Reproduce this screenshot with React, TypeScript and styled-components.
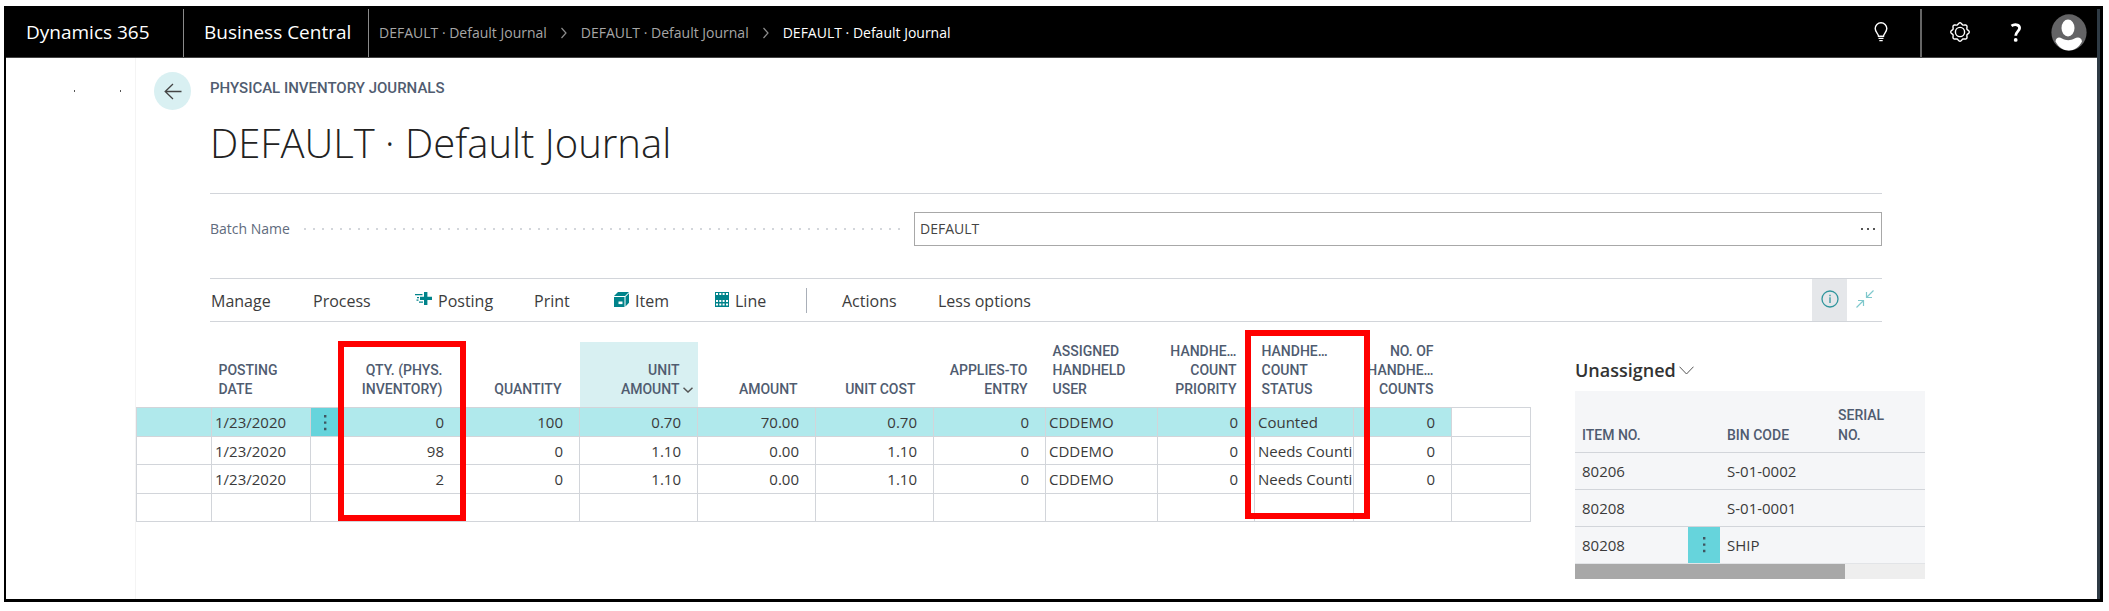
import React from 'react';
import styled, { createGlobalStyle, css } from 'styled-components';

const ui = `"Open Sans", "Noto Sans", sans-serif`;
const caps = `Roboto, "Liberation Sans", sans-serif`;
const line = '#d2d5da';
const slate = '#505c70';
const teal = '#00838a';

const Global = createGlobalStyle`
  *, *::before, *::after { box-sizing: border-box; }
  body { margin: 0; background: #fff; color: #333; font: 15px/20px ${ui}; }
  button { font: inherit; color: inherit; background: none; border: 0; padding: 0; cursor: pointer; }
  a { color: inherit; text-decoration: none; }
  svg { display: block; }
  h1, h2 { margin: 0; }
`;

const Frame = styled.div`
  margin: 6px 6px 8px 4px;
  border: solid #000;
  border-width: 3px 3px 3px 2px;
`;
const Inner = styled.div`
  border-right: 3px solid #2f3b45;
`;
const TopBar = styled.header`
  display: flex;
  height: 49px;
  background: #000;
  color: #fff;
  border-bottom: 1px solid #444;
`;
const Brand = styled.a<{ $w: number }>`
  flex: 0 0 ${p => p.$w}px;
  padding-left: 20px;
  border-right: 1px solid #8a8a8a;
  font-size: 19px;
  line-height: 46px;
  white-space: nowrap;
`;
const Crumbs = styled.nav`
  display: flex;
  align-items: center;
  gap: 13px;
  padding-left: 10px;
  flex: 1;
  white-space: nowrap;
  font-size: 14px;
`;
const Crumb = styled.a<{ $current?: boolean }>`
  color: ${p => (p.$current ? '#fff' : '#a6a6a6')};
`;
const TopIcons = styled.div`
  display: flex;
  align-items: stretch;
`;
const IconButton = styled.button<{ $w: number; $divided?: boolean; $end?: boolean }>`
  width: ${p => p.$w}px;
  display: flex;
  align-items: center;
  justify-content: center;
  padding-bottom: 2px;
  ${p => p.$divided && css`border-right: 2px solid #666;`}
  ${p => p.$end && css`justify-content: flex-end; padding-right: 10px;`}
`;

const Page = styled.div`
  display: flex;
`;
const Rail = styled.aside`
  flex: 0 0 130px;
  display: flex;
  justify-content: flex-end;
  gap: 45px;
  padding: 32px 14px 0 0;
  border-right: 1px solid #f4f4f4;
`;
const Speck = styled.i`
  width: 1px;
  height: 2px;
  background: #555;
`;
const Main = styled.main`
  flex: 1;
  min-width: 0;
  padding: 14px 0 20px;
`;
const Heading = styled.div`
  display: flex;
  align-items: flex-start;
  gap: 19px;
  padding-left: 18px;
`;
const Back = styled.button`
  width: 37px;
  height: 38px;
  border-radius: 50%;
  background: #d9f0f2;
  display: grid;
  place-items: center;
`;
const Overline = styled.div`
  font: 500 15px/20px ${caps};
  color: ${slate};
  padding-top: 6px;
`;
const Title = styled.h1`
  font: 300 40px/56px ${ui};
  color: #222;
  padding-top: 17px;
`;
const Section = styled.section`
  margin: 0 215px 0 74px;
`;
const Field = styled.div`
  display: flex;
  align-items: center;
  gap: 11px;
  margin-top: 22px;
  padding: 18px 0 32px;
  border-top: 1px solid ${line};
  font-size: 14px;
  color: #5f6b7d;
`;
const FieldLabel = styled.label`
  flex: 0 0 693px;
  display: flex;
  align-items: center;
  gap: 14px;
  white-space: nowrap;
`;
const Leader = styled.span`
  flex: 1;
  height: 2px;
  background: repeating-linear-gradient(90deg, #d3d6db 0 2px, transparent 2px 9px);
`;
const Lookup = styled.div`
  flex: 1;
  display: flex;
  height: 34px;
  border: 1px solid #a8a8a8;
`;
const LookupInput = styled.input`
  flex: 1;
  min-width: 0;
  border: 0;
  outline: 0;
  padding: 0 5px;
  background: none;
  font: 14px/20px ${ui};
  color: #444;
`;
const LookupButton = styled.button`
  width: 26px;
  display: grid;
  place-items: center;
`;
const Toolbar = styled.div`
  display: flex;
  align-items: center;
  height: 44px;
  border: solid ${line};
  border-width: 1px 0;
  font-size: 16px;
  color: #3c3c3c;
`;
const Tool = styled.button<{ $w: number }>`
  flex: 0 0 ${p => p.$w}px;
  display: flex;
  align-items: center;
  gap: 6px;
  padding: 2px 0 0 1px;
  text-align: left;
  white-space: nowrap;
  svg { margin-top: -4px; }
`;
const Rule = styled.span`
  width: 1px;
  height: 25px;
  margin-right: 34px;
  background: #a9afb8;
`;
const Spacer = styled.span`
  flex: 1;
`;
const SideTool = styled.button<{ $on?: boolean }>`
  width: 35px;
  height: 42px;
  display: grid;
  place-items: center;
  padding-bottom: 2px;
  background: ${p => (p.$on ? '#e5e7ea' : 'none')};
`;

const Body = styled.div`
  display: flex;
  align-items: flex-start;
`;
const Journal = styled.div`
  position: relative;
  flex: 0 0 1394px;
  margin-top: 20px;
`;
const Grid = styled.table`
  width: 100%;
  table-layout: fixed;
  border-collapse: collapse;
`;
const HeadCell = styled.th<{ $right?: boolean; $active?: boolean }>`
  height: 65px;
  padding: 0 ${p => (p.$right ? 18 : 0)}px 8px ${p => (p.$right ? 0 : 7)}px;
  vertical-align: bottom;
  text-align: ${p => (p.$right ? 'right' : 'left')};
  font: 500 14px/19px ${caps};
  color: ${slate};
  white-space: nowrap;
  background: ${p => (p.$active ? '#d8f0f2' : 'none')};
  svg { float: right; margin: 7px -13px 0 0; }
`;
const HeadLine = styled.div`
  display: flex;
  justify-content: inherit;
  display: block;
  margin-left: -4px;
  padding-left: 4px;
`;
const Row = styled.tr<{ $selected?: boolean }>`
  height: 29px;
  &:nth-child(even) { height: 28px; }
  background: ${p => (p.$selected ? '#b0e9ec' : 'none')};
`;
const Cell = styled.td<{ $right?: boolean; $plain?: boolean; $menu?: boolean }>`
  border: 1px solid ${line};
  padding: 0 ${p => (p.$right ? 16 : 3)}px 0 3px;
  text-align: ${p => (p.$right ? 'right' : 'left')};
  line-height: 26px;
  color: #3a3a3a;
  white-space: nowrap;
  overflow: hidden;
  ${p => p.$plain && css`background: #fff;`}
  ${p => p.$menu && css`background: #66d4dc;`}
`;
const MenuButton = styled.button`
  display: grid;
  place-items: center;
  width: 100%;
  height: 24px;
`;
const Highlight = styled.div<{ $x: number; $y: number; $w: number; $h: number }>`
  position: absolute;
  left: ${p => p.$x}px;
  top: ${p => p.$y}px;
  width: ${p => p.$w}px;
  height: ${p => p.$h}px;
  border: 6px solid #f00;
  pointer-events: none;
`;

const FactBox = styled.aside`
  flex: 0 0 350px;
  margin: 35px 0 0 44px;
`;
const FactTitle = styled.h2`
  button { display: flex; align-items: center; gap: 3px; }
  font: 600 18px/26px ${ui};
  color: #333;
  padding-bottom: 8px;
`;
const FactTable = styled.table`
  width: 100%;
  table-layout: fixed;
  border-collapse: collapse;
  background: #f5f6f8;
`;
const FactHead = styled.th`
  height: 61px;
  padding: 0 0 7px 7px;
  vertical-align: bottom;
  text-align: left;
  font: 500 14px/20px ${caps};
  color: ${slate};
`;
const FactCell = styled.td<{ $menu?: boolean }>`
  height: 37px;
  padding: ${p => (p.$menu ? '0' : '0 0 0 7px')};
  border-top: 1px solid ${line};
  color: #3a3a3a;
  background: ${p => (p.$menu ? '#66d4dc' : 'none')};
`;
const ScrollTrack = styled.div`
  height: 16px;
  border-top: 1px solid #e2e4e7;
  background: #eee;
`;
const ScrollThumb = styled.div`
  width: 77%;
  height: 15px;
  background: #a8a8a8;
`;

const Chevron = ({ w, h, s = 1 }: { w: number; h: number; s?: number }) => (
  <svg width={w} height={h} viewBox={`0 0 ${w} ${h}`} fill="none" stroke="#555" strokeWidth={s}>
    <path d={`M.5 .7 L${w / 2} ${h - 1} L${w - 0.5} .7`} />
  </svg>
);
const Next = () => (
  <svg width="8" height="12" viewBox="0 0 8 12" fill="none" stroke="#8c8c8c" strokeWidth="1.2">
    <path d="M1.5 1 6 6 1.5 11" />
  </svg>
);
const Dots = () => (
  <svg width="4" height="17" viewBox="0 0 4 17" fill="#3f5560">
    <path d="M1 1h2.4v2.4H1zM1 7.4h2.4v2.4H1zM1 13.8h2.4v2.4H1z" />
  </svg>
);
const gear = Array.from({ length: 64 }, (_, i) => {
  const a = (i / 64) * Math.PI * 2;
  const r = 8.4 + 0.9 * Math.cos(a * 8);
  return `${i ? 'L' : 'M'}${(10 + r * Math.sin(a)).toFixed(2)} ${(10 - r * Math.cos(a)).toFixed(2)}`;
}).join('') + 'Z';

const cols = [75, 99, 28, 122, 119, 118, 118, 118, 112, 112, 97, 99, 98, 79];
const heads: { t: string[]; r?: boolean; active?: boolean }[] = [
  { t: [] },
  { t: ['POSTING', 'DATE'] },
  { t: [] },
  { t: ['QTY. (PHYS.', 'INVENTORY)'], r: true },
  { t: ['QUANTITY'], r: true },
  { t: ['UNIT', 'AMOUNT'], r: true, active: true },
  { t: ['AMOUNT'], r: true },
  { t: ['UNIT COST'], r: true },
  { t: ['APPLIES-TO', 'ENTRY'], r: true },
  { t: ['ASSIGNED', 'HANDHELD', 'USER'] },
  { t: ['HANDHE…', 'COUNT', 'PRIORITY'], r: true },
  { t: ['HANDHE…', 'COUNT', 'STATUS'] },
  { t: ['NO. OF', 'HANDHE…', 'COUNTS'], r: true },
  { t: [] },
];
const rows: string[][] = [
  ['', '1/23/2020', '', '0', '100', '0.70', '70.00', '0.70', '0', 'CDDEMO', '0', 'Counted', '0', ''],
  ['', '1/23/2020', '', '98', '0', '1.10', '0.00', '1.10', '0', 'CDDEMO', '0', 'Needs Counti', '0', ''],
  ['', '1/23/2020', '', '2', '0', '1.10', '0.00', '1.10', '0', 'CDDEMO', '0', 'Needs Counti', '0', ''],
  Array(14).fill(''),
];
const bins = [
  ['80206', 'S-01-0002'],
  ['80208', 'S-01-0001'],
  ['80208', 'SHIP'],
];

export default function App() {
  return (
    <>
      <Global />
      <Frame>
        <Inner>
          <TopBar>
            <Brand href="#" $w={178}>Dynamics 365</Brand>
            <Brand href="#" $w={185}>Business Central</Brand>
            <Crumbs aria-label="Breadcrumb">
              <Crumb href="#">DEFAULT · Default Journal</Crumb>
              <Next />
              <Crumb href="#">DEFAULT · Default Journal</Crumb>
              <Next />
              <Crumb href="#" $current>DEFAULT · Default Journal</Crumb>
            </Crumbs>
            <TopIcons>
              <IconButton $w={80} $divided aria-label="Tell me">
                <svg width="14" height="20" viewBox="0 0 14 20" fill="none" stroke="#fff" strokeWidth="1.4">
                  <path d="M4.5 14.2c0-2.6-3.3-4-3.3-7.600a5.800 5.800 0 0 1 11.600 0c0 3.600-3.300 5-3.300 7.600zM4.500 16.400h5M5.300 18.600h3.400" />
                </svg>
              </IconButton>
              <IconButton $w={76} aria-label="Settings">
                <svg width="20" height="20" viewBox="0 0 20 20" fill="none" stroke="#fff" strokeWidth="1.4">
                  <path d={gear} />
                  <circle cx="10" cy="10" r="4.600" />
                </svg>
              </IconButton>
              <IconButton $w={35} aria-label="Help">
                <svg width="12" height="19" viewBox="0 0 12 19" fill="none" stroke="#fff" strokeWidth="2.800">
                  <path d="M1.500 2.900C4.500 .8 9.600 1.300 9.600 5c0 3.300-3.900 3.600-3.900 7.800" />
                  <circle cx="5.700" cy="16.900" r="1.900" fill="#fff" stroke="none" />
                </svg>
              </IconButton>
              <IconButton $w={64} $end aria-label="Account">
                <svg width="36" height="37" viewBox="0 0 36 37">
                  <ellipse cx="18" cy="18.500" rx="17.600" ry="18.200" fill="#636365" />
                  <ellipse cx="17" cy="14" rx="6.500" ry="8.500" fill="#fff" />
                  <path d="M4.500 27.500c.5-4.500 4-4.500 6.500-3 4 2.200 8.500 2.200 12.500 0 3-1.500 7-1.500 7.500 3-3 6-8 9-13.200 9s-10.300-3-13.300-9z" fill="#fff" />
                </svg>
              </IconButton>
            </TopIcons>
          </TopBar>
          <Page>
            <Rail>
              <Speck />
              <Speck />
            </Rail>
            <Main>
              <Heading>
                <Back aria-label="Back">
                  <svg width="18" height="17" viewBox="0 0 18 17" fill="none" stroke="#444" strokeWidth="1.300">
                    <path d="M17.500 8.500H1.200M9 1 1.200 8.500 9 16" />
                  </svg>
                </Back>
                <div>
                  <Overline>PHYSICAL INVENTORY JOURNALS</Overline>
                  <Title>DEFAULT · Default Journal</Title>
                </div>
              </Heading>
              <Section>
                <Field>
                  <FieldLabel htmlFor="batch">Batch Name<Leader /></FieldLabel>
                  <Lookup>
                    <LookupInput id="batch" defaultValue="DEFAULT" />
                    <LookupButton aria-label="Look up">
                      <svg width="14" height="2" viewBox="0 0 14 2" fill="#555">
                        <path d="M0 0h2v2H0zM6 0h2v2H6zM12 0h2v2h-2z" />
                      </svg>
                    </LookupButton>
                  </Lookup>
                </Field>
                <Toolbar role="toolbar">
                  <Tool $w={102}>Manage</Tool>
                  <Tool $w={102}>Process</Tool>
                  <Tool $w={119}>
                    <svg width="17" height="14" viewBox="0 0 17 14" fill={teal}>
                      <path d="M9 0h3.400v4.700H17v3.400h-4.600V13H9V8.100H5V4.700h4zM0 2h7.500v1.300H0zM2 4.900h2v1.300H2zM1.500 7.500h2v1.300h-2zM4 9.500h4v1.300H4z" />
                    </svg>
                    Posting
                  </Tool>
                  <Tool $w={80}>Print</Tool>
                  <Tool $w={101}>
                    <svg width="15" height="15" viewBox="0 0 15 15" fill={teal}>
                      <path d="M4 0h11l-4 4H0zM0 5h10.500v10H0zM11.500 4.700 15 1.200v9.500L11.500 14.500z" />
                      <path d="M4.500 9.500h4v2.600h-4z" fill="#fff" />
                    </svg>
                    Item
                  </Tool>
                  <Tool $w={92}>
                    <svg width="14" height="15" viewBox="0 0 14 15" fill={teal}>
                      <path d="M0 0h14v15H0z" />
                      <path d="M1 1h2v2H1zM4.300 1h2v2h-2zM7.600 1h2v2h-2zM11 1h2v2h-2zM1 8h2v2H1zM4.300 8h2v2h-2zM7.600 8h2v2h-2zM11 8h2v2h-2zM1 11.500h2v2H1zM4.300 11.500h2v2h-2zM7.600 11.500h2v2h-2zM11 11.500h2v2h-2z" fill="#fff" />
                    </svg>
                    Line
                  </Tool>
                  <Rule />
                  <Tool $w={96}>Actions</Tool>
                  <Tool $w={110}>Less options</Tool>
                  <Spacer />
                  <SideTool $on aria-label="Show the FactBox pane">
                    <svg width="18" height="18" viewBox="0 0 18 18" fill="none" stroke="#2f959c" strokeWidth="1.300">
                      <circle cx="9" cy="9" r="8" />
                      <path d="M9 7.300V13M9 4.700v1.500" />
                    </svg>
                  </SideTool>
                  <SideTool aria-label="Collapse">
                    <svg width="18" height="18" viewBox="0 0 18 18" fill="none" stroke="#7fc8cc" strokeWidth="1.200">
                      <path d="M17.500.5 10.500 7.500M10.500 2v5.500H16M.5 17.500 7.500 10.500M2 10.500h5.500V16" />
                    </svg>
                  </SideTool>
                </Toolbar>
              </Section>
              <Body>
                <Journal>
                  <Grid>
                    <colgroup>
                      {cols.map((w, i) => <col key={i} style={{ width: w }} />)}
                    </colgroup>
                    <thead>
                      <tr>
                        {heads.map((h, i) => (
                          <HeadCell key={i} $right={h.r} $active={h.active}>
                            {h.t.map((t, k) => (
                              <HeadLine key={t}>
                                {h.active && k === 1 && <Chevron w={10} h={6} s={1.5} />}
                                {t}
                              </HeadLine>
                            ))}
                          </HeadCell>
                        ))}
                      </tr>
                    </thead>
                    <tbody>
                      {rows.map((r, y) => (
                        <Row key={y} $selected={y === 0}>
                          {r.map((v, i) => (
                            <Cell key={i} $right={heads[i].r} $plain={i === 13} $menu={y === 0 && i === 2}>
                              {y === 0 && i === 2 ? <MenuButton aria-label="Row menu"><Dots /></MenuButton> : v}
                            </Cell>
                          ))}
                        </Row>
                      ))}
                    </tbody>
                  </Grid>
                  <Highlight $x={202} $y={-1} $w={128} $h={180} />
                  <Highlight $x={1109} $y={-12} $w={125} $h={189} />
                </Journal>
                <FactBox>
                  <FactTitle><button>Unassigned<Chevron w={15} h={9} /></button></FactTitle>
                  <FactTable>
                    <colgroup>
                      <col style={{ width: 113 }} />
                      <col style={{ width: 32 }} />
                      <col style={{ width: 111 }} />
                      <col />
                    </colgroup>
                    <thead>
                      <tr>
                        <FactHead>ITEM NO.</FactHead>
                        <FactHead />
                        <FactHead>BIN CODE</FactHead>
                        <FactHead>SERIAL<br />NO.</FactHead>
                      </tr>
                    </thead>
                    <tbody>
                      {bins.map(([item, bin], i) => (
                        <tr key={i}>
                          <FactCell>{item}</FactCell>
                          <FactCell $menu={i === 2}>
                            {i === 2 && <MenuButton aria-label="Row menu"><Dots /></MenuButton>}
                          </FactCell>
                          <FactCell>{bin}</FactCell>
                          <FactCell />
                        </tr>
                      ))}
                    </tbody>
                  </FactTable>
                  <ScrollTrack><ScrollThumb /></ScrollTrack>
                </FactBox>
              </Body>
            </Main>
          </Page>
        </Inner>
      </Frame>
    </>
  );
}
